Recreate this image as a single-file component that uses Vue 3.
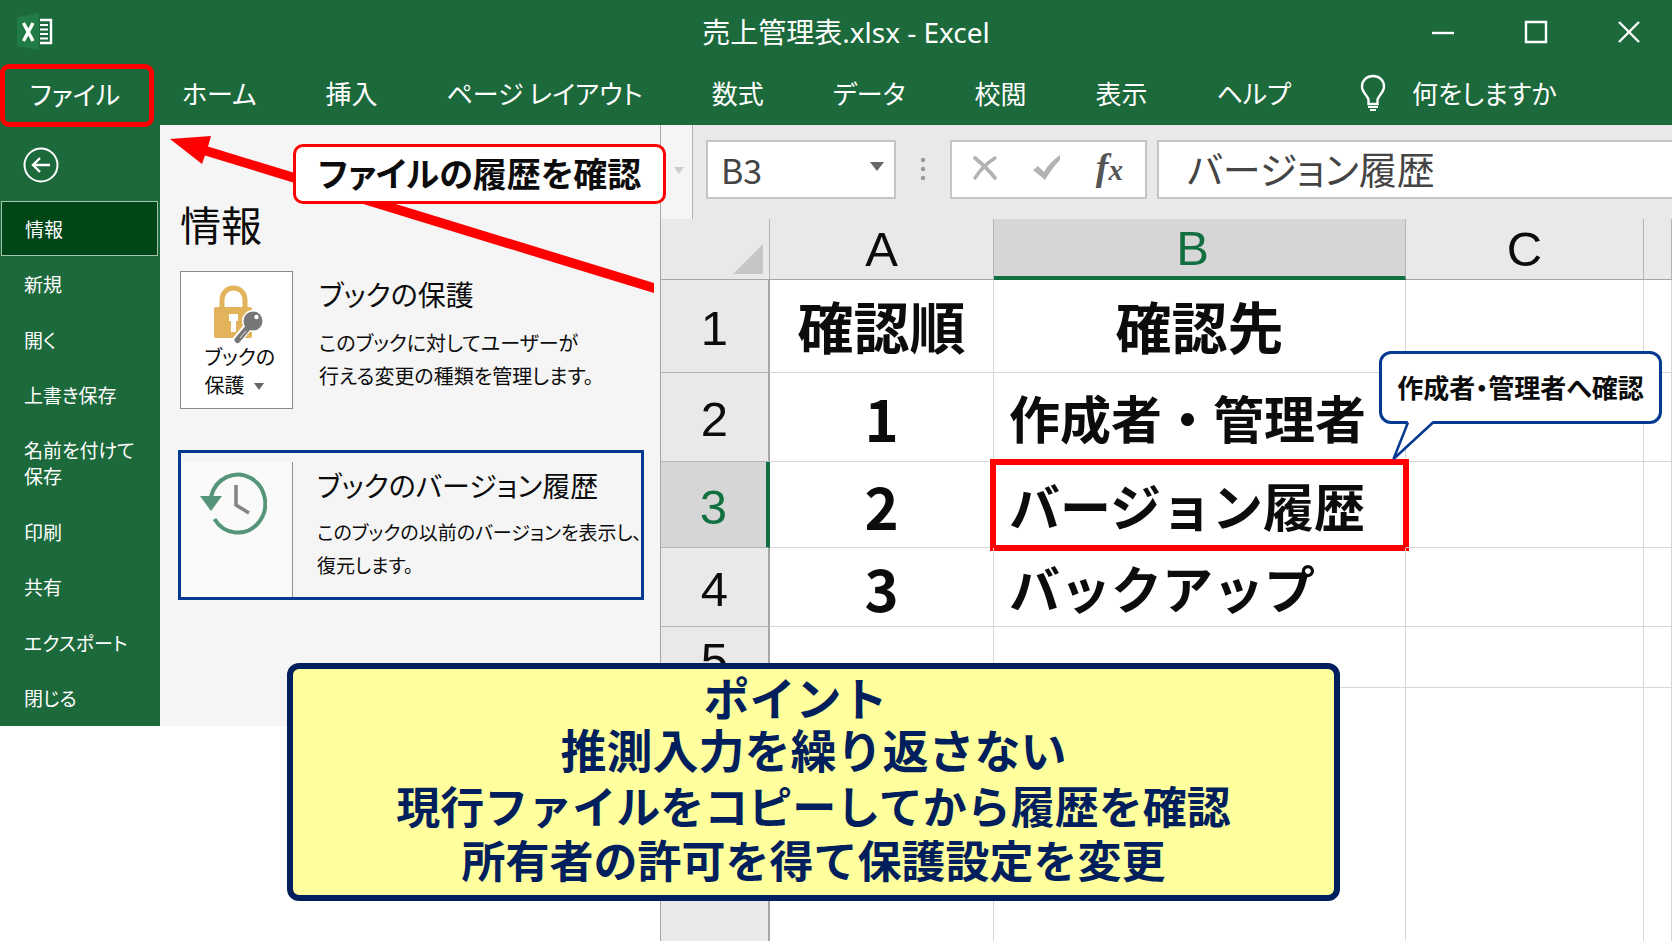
<script setup>
import { ref } from 'vue'

const tabs = ['ホーム', '挿入', 'ページ レイアウト', '数式', 'データ', '校閲', '表示', 'ヘルプ']
const menu = ['情報', '新規', '開く', '上書き保存', '名前を付けて保存', '印刷', '共有', 'エクスポート', '閉じる']
const current = ref('情報')
const cellName = ref('B3')
const formula = ref('バージョン履歴')

const columns = ['A', 'B', 'C', '']
const rows = [
  { n: '1', a: '確認順', b: '確認先', head: true },
  { n: '2', a: '1', b: '作成者・管理者' },
  { n: '3', a: '2', b: 'バージョン履歴', active: true },
  { n: '4', a: '3', b: 'バックアップ' },
  { n: '5', a: '', b: '' },
  { n: '', a: '', b: '' }
]
const points = ['推測入力を繰り返さない', '現行ファイルをコピーしてから履歴を確認', '所有者の許可を得て保護設定を変更']
</script>

<template>
  <div class="window">
    <header class="top">
      <div class="titlebar">
        <svg class="logo" width="38" height="38" viewBox="0 0 38 38" aria-hidden="true">
          <path d="M0 4 22 0V37L0 33Z" fill="#217b46" />
          <path d="M6.500 10 16 28M16 10 6.500 28" stroke="#fff" stroke-width="3.400" fill="none" />
          <path d="M23 7H34V30H23" stroke="#fff" stroke-width="2.4" fill="none" />
          <path d="M23 12H31M23 16.500H31M23 21H31M23 25.500H31" stroke="#fff" stroke-width="2.200" />
        </svg>
        <h1 class="title">売上管理表.xlsx - Excel</h1>
        <div class="controls">
          <button type="button" aria-label="最小化">
            <svg width="24" height="24" viewBox="0 0 24 24"><path d="M1 13H23" /></svg>
          </button>
          <button type="button" aria-label="最大化">
            <svg width="24" height="24" viewBox="0 0 24 24"><path d="M2 2H22V22H2Z" /></svg>
          </button>
          <button type="button" aria-label="閉じる">
            <svg width="24" height="24" viewBox="0 0 24 24"><path d="M2 2 22 22M22 2 2 22" /></svg>
          </button>
        </div>
      </div>
      <nav class="tabs">
        <button type="button" class="tab file">ファイル</button>
        <button v-for="t in tabs" :key="t" type="button" class="tab">{{ t }}</button>
        <button type="button" class="tab ask">
          <svg width="26" height="38" viewBox="0 0 26 38" fill="none" stroke="#fff" stroke-width="2.400" aria-hidden="true">
            <path d="M8.500 30V26C8.500 22 2 19 2 12.500C2 6 7 2 13 2S24 6 24 12.500C24 19 17.500 22 17.500 26V30Z" />
            <path d="M8 33H18M10 36H16" stroke-width="2" />
          </svg>
          何をしますか
        </button>
      </nav>
    </header>

    <div class="body">
      <div class="backstage">
        <aside class="side">
          <button type="button" class="back" aria-label="戻る">
            <svg width="36" height="38" viewBox="0 0 36 38" fill="none" stroke="#fff" stroke-width="2">
              <circle cx="18" cy="19" r="16.500" />
              <path d="M27 19H10M17 12 10 19 17 26" stroke-width="2.400" />
            </svg>
          </button>
          <button
            v-for="m in menu"
            :key="m"
            type="button"
            class="item"
            :class="{ current: m === current }"
            @click="current = m"
          >{{ m }}</button>
        </aside>

        <main class="info">
          <h2>情報</h2>
          <section class="entry">
            <button type="button" class="tile protect">
              <svg width="54" height="60" viewBox="0 0 54 60" aria-hidden="true">
                <path d="M9 24V15C9 8 14 3 20.500 3S32 8 32 15V24" fill="none" stroke="#e3b35c" stroke-width="5" />
                <rect x="1" y="22" width="38" height="31" rx="2" fill="#e3b35c" />
                <path d="M16 29H25V36H23V47H18V36H16Z" fill="#fff" />
                <path d="M40 36 24 55" stroke="#fff" stroke-width="9" stroke-linecap="round" />
                <circle cx="40" cy="36" r="11" fill="#fff" />
                <path d="M39 38 24.500 55" stroke="#777" stroke-width="6" stroke-linecap="round" />
                <path d="M33 46 27 53" stroke="#ddd" stroke-width="1" />
                <circle cx="40" cy="36" r="9.500" fill="#777" />
                <circle cx="43.500" cy="32" r="2.200" fill="#fff" />
              </svg>
              <span>ブックの<br />保護<i class="caret"></i></span>
            </button>
            <div class="words">
              <h3>ブックの保護</h3>
              <p>このブックに対してユーザーが<br />行える変更の種類を管理します。</p>
            </div>
          </section>
          <section class="entry history">
            <button type="button" class="tile clock" aria-label="バージョン履歴">
              <svg width="68" height="64" viewBox="0 0 68 64" fill="none" aria-hidden="true">
                <path d="M12 25A27.500 29 0 1 1 15.500 47" stroke="#57957a" stroke-width="4" />
                <path d="M1 24H23L12 39Z" fill="#57957a" />
                <path d="M37 13V33L50 41" stroke="#858585" stroke-width="3.600" />
              </svg>
            </button>
            <div class="words">
              <h3>ブックのバージョン履歴</h3>
              <p>このブックの以前のバージョンを表示し、<br />復元します。</p>
            </div>
          </section>
        </main>
      </div>

      <div class="book">
        <div class="formula">
          <div class="stub" aria-hidden="true"><i class="caret"></i></div>
          <div class="field name">
            <input v-model="cellName" aria-label="名前ボックス" />
            <button type="button" aria-label="名前の一覧"><i class="caret"></i></button>
          </div>
          <svg class="dots" width="6" height="26" viewBox="0 0 6 26" fill="#999" aria-hidden="true">
            <circle cx="3" cy="4" r="2.200" /><circle cx="3" cy="13" r="2.200" /><circle cx="3" cy="22" r="2.200" />
          </svg>
          <div class="field acts">
            <button type="button" aria-label="キャンセル">
              <svg width="26" height="26" viewBox="0 0 26 26" fill="none" stroke="#b3b3b3" stroke-linecap="round">
                <path d="M3 3C9 8 17 15 23 23" stroke-width="3.800" />
                <path d="M23 3C15 8 8 15 3 23" stroke-width="3.400" />
              </svg>
            </button>
            <button type="button" aria-label="入力">
              <svg width="28" height="26" viewBox="0 0 28 26"><path d="M0 15 5 11 11 17C15 10 20 5 27 0V5C21 11 17 17 12 25Z" fill="#b3b3b3" /></svg>
            </button>
            <button type="button" class="fx" aria-label="関数の挿入">f<small>x</small></button>
          </div>
          <div class="field line"><input v-model="formula" aria-label="数式バー" /></div>
        </div>

        <table class="grid">
          <colgroup>
            <col class="cn" /><col class="ca" /><col class="cb" /><col class="cc" /><col />
          </colgroup>
          <thead>
            <tr>
              <th class="corner"><svg width="32" height="32" viewBox="0 0 32 32" aria-hidden="true"><path d="M31 1V31H1Z" fill="#c6c6c6" /></svg></th>
              <th v-for="c in columns" :key="c" scope="col" :class="{ on: c === 'B' }">{{ c }}</th>
            </tr>
          </thead>
          <tbody>
            <tr v-for="(r, i) in rows" :key="i" :class="'r' + (i + 1)">
              <th scope="row" :class="{ on: r.active }">{{ r.n }}</th>
              <td class="mid" :class="{ head: r.head }">{{ r.a }}</td>
              <td :class="{ mid: r.head, head: r.head, selected: r.active }">{{ r.b }}</td>
              <td></td>
              <td></td>
            </tr>
          </tbody>
        </table>
      </div>
    </div>

    <svg class="arrow" width="490" height="160" viewBox="0 0 490 160" fill="#f00" aria-hidden="true">
      <path d="M2 4 43 1 40 11.500 486 148V158L37 20.500 34 29Z" />
    </svg>
    <div class="callout">ファイルの履歴を確認</div>

    <div class="bubble">
      作成者・管理者へ確認
      <svg width="44" height="42" viewBox="0 0 44 42" aria-hidden="true">
        <path d="M17 0 2 38 42 0" fill="#fff" />
        <path d="M17 1.500 2.500 38 42 1.500" fill="none" stroke="#053a93" stroke-width="2.500" />
      </svg>
    </div>

    <div class="point">
      <strong>ポイント</strong>
      <p v-for="(p, i) in points" :key="i" :class="'p' + i">{{ p }}</p>
    </div>
  </div>
</template>

<style>
body {
  margin: 0;
}
</style>

<style scoped>
.window {
  position: relative;
  display: flex;
  flex-direction: column;
  min-height: 100vh;
  overflow: hidden;
  background: #fff;
  color: #0c0c0c;
  font-family: "Noto Sans CJK JP", sans-serif;
}
.window * {
  box-sizing: border-box;
}
button,
input {
  margin: 0;
  padding: 0;
  border: 0;
  background: none;
  color: inherit;
  font: inherit;
}
h1, h2, h3, p {
  margin: 0;
  font-weight: 400;
}
svg {
  display: block;
  flex: none;
}
.caret {
  display: inline-block;
  border: 5px solid transparent;
  border-top: 7px solid #666;
  border-bottom: 0;
}

/* title bar and ribbon tabs */
.top {
  background: #1c693b;
  color: #fff;
}
.titlebar {
  display: grid;
  grid-template-columns: 1fr auto 1fr;
  align-items: center;
  height: 64px;
  padding: 0 31px 0 17px;
}
.title {
  padding-left: 34px;
  font-family: "Noto Sans", "Noto Sans CJK JP", sans-serif;
  font-size: 28px;
  line-height: 40px;
}
.controls {
  display: flex;
  justify-content: flex-end;
  gap: 69px;
}
.controls svg {
  fill: none;
  stroke: #fff;
  stroke-width: 2.4;
}
.tabs {
  display: flex;
  align-items: center;
  gap: 69px;
  height: 61px;
  padding-bottom: 3px;
  font-size: 26px;
  line-height: 40px;
  font-feature-settings: "palt";
}
.tab {
  flex: none;
  white-space: nowrap;
}
.file {
  align-self: flex-start;
  width: 154px;
  height: 63px;
  margin-right: -41px;
  padding: 0 4px 4px 0;
  border: 5px solid #f00;
  border-radius: 9px;
  position: relative;
  z-index: 2;
}
.ask {
  display: flex;
  align-items: center;
  gap: 26px;
}

.body {
  display: flex;
  flex: 1;
}

/* backstage */
.backstage {
  display: flex;
  flex: none;
  align-self: flex-start;
  width: 660px;
  height: 601px;
  font-feature-settings: "palt";
}
.side {
  display: flex;
  flex: none;
  flex-direction: column;
  width: 160px;
  background: #1c693b;
  color: #fff;
}
.back {
  height: 76px;
  padding: 4px 0 0 23px;
}
.item {
  flex: 1 1 55px;
  padding: 0 20px 0 24px;
  text-align: left;
  font-size: 19px;
  line-height: 26px;
}
.item:nth-of-type(6) {
  flex-basis: 81px;
}
.current {
  margin: 0 2px 0 1px;
  padding-left: 23px;
  border: 1px solid #a5c3ae;
  background: #004616;
}
.info {
  flex: 1;
  min-width: 0;
  padding: 68px 16px 0 18px;
  background: #f5f5f5;
}
h2 {
  padding-left: 2px;
  font-size: 41px;
  line-height: 60px;
}
.entry {
  display: flex;
  margin-top: 18px;
  padding-left: 2px;
}
.tile {
  display: flex;
  flex: none;
  flex-direction: column;
  align-items: center;
  width: 113px;
}
.protect {
  height: 138px;
  padding-top: 13px;
  border: 1px solid #8a8a8a;
  background: #fff;
  font-size: 20px;
  line-height: 28px;
}
.protect svg {
  margin: 0 0 -2px 6px;
}
.protect span {
  width: 64px;
  text-align: left;
  white-space: nowrap;
}
.protect .caret {
  margin: 0 0 3px 9px;
}
.words {
  padding-left: 26px;
  white-space: nowrap;
}
h3 {
  font-size: 28px;
  line-height: 46px;
}
.words p {
  margin-top: 9px;
  font-size: 20px;
  line-height: 33px;
}
.history {
  margin-top: 41px;
  padding: 0;
  height: 150px;
  border: 3px solid #053a93;
}
.history .tile {
  width: 112px;
  margin-top: 9px;
  padding-top: 10px;
  border-right: 1px solid #8f8f8f;
  background: #fafafa;
}
.clock svg {
  margin-right: 8px;
}
.history .words {
  padding: 9px 0 0 24px;
}
.history p {
  margin-top: 7px;
  font-size: 19px;
}

/* formula bar */
.book {
  display: flex;
  flex: 1;
  flex-direction: column;
  min-width: 0;
  border-left: 1px solid #a6a6a6;
}
.formula {
  display: flex;
  height: 94px;
  background: #e9e9e9;
  color: #444;
}
.stub {
  width: 32px;
  margin-right: 13px;
  padding: 30px 0 0 13px;
  border-right: 1px solid #b0b0b0;
  background: #f5f5f5;
}
.stub .caret {
  border-top-color: #ccc;
}
.field {
  display: flex;
  align-items: center;
  height: 59px;
  margin-top: 15px;
  border: 2px solid #c5c5c5;
  background: #fff;
}
.field input {
  flex: 1;
  min-width: 0;
  height: 50px;
  font-size: 34px;
}
.name {
  width: 190px;
  padding: 0 10px 0 13px;
}
.name .caret {
  border-width: 9px 7px 0;
  margin-bottom: 6px;
}
.dots {
  margin: 31px 24px 0;
}
.acts {
  justify-content: space-between;
  width: 197px;
  padding: 0 22px 3px 20px;
}
.fx {
  color: #555;
  font: italic 600 38px/44px "Liberation Serif", serif;
}
.fx small {
  font-size: 29px;
}
.line {
  flex: 1;
  margin-left: 10px;
  border-right: 0;
  padding: 0 0 5px 28px;
}
.line input {
  font-size: 38px;
  font-feature-settings: "palt";
}

/* sheet */
.grid {
  width: 100%;
  table-layout: fixed;
  border-collapse: separate;
  border-spacing: 0;
}
.cn { width: 109px; }
.ca { width: 224px; }
.cb { width: 412px; }
.cc { width: 238px; }
th {
  padding: 0;
  border-right: 1px solid #b5b5b5;
  border-bottom: 1px solid #a6a6a6;
  background: #e9e9e9;
  font: 400 49px/56px "Liberation Sans", Arial, sans-serif;
}
tbody th {
  padding-top: 4px;
  border-right: 2px solid #a6a6a6;
  border-bottom-color: #b5b5b5;
}
thead tr { height: 61px; }
.corner svg {
  margin: 20px 5px 0 auto;
}
.on {
  background: #d6d6d6;
  color: #127040;
}
thead .on {
  padding-right: 14px;
  border-bottom: 4px solid #127040;
}
tbody .on {
  border-right: 4px solid #127040;
}
td {
  position: relative;
  padding: 0 0 0 15px;
  border-right: 1px solid #d6d6d6;
  border-bottom: 1px solid #d6d6d6;
  font-size: 51px;
  font-weight: 700;
  line-height: 60px;
  white-space: nowrap;
}
.mid {
  padding: 0;
  text-align: center;
  font-size: 58px;
}
.head {
  padding-bottom: 3px;
  font-size: 56px;
}
.r1 { height: 93px; }
.r2 { height: 89px; }
.r3 { height: 86px; }
.r4 { height: 79px; }
.r5 { height: 61px; }
.r6 { height: 253px; }
.r5 th,
.r6 th,
.r6 td {
  border-bottom: 0;
}
.selected::after {
  content: "";
  position: absolute;
  inset: -3px -4px -4px;
  border: 6px solid #f00;
}

/* annotations over the sheet */
.arrow {
  position: absolute;
  left: 168px;
  top: 135px;
}
.callout {
  position: absolute;
  left: 293px;
  top: 144px;
  padding: 4px 22px 6px;
  border: 3px solid #f00;
  border-radius: 10px;
  background: #fff;
  font-size: 34px;
  font-weight: 700;
  line-height: 44px;
  white-space: nowrap;
  font-feature-settings: "palt";
}
.bubble {
  position: absolute;
  left: 1379px;
  top: 351px;
  width: 283px;
  height: 73px;
  border: 3px solid #053a93;
  border-radius: 12px;
  background: #fff;
  font-size: 26px;
  font-weight: 700;
  line-height: 66px;
  text-align: center;
  white-space: nowrap;
  font-feature-settings: "palt";
}
.bubble svg {
  position: absolute;
  left: 9px;
  top: 67px;
}
.point {
  position: absolute;
  left: 287px;
  top: 663px;
  width: 1053px;
  height: 238px;
  padding-top: 2px;
  border: 6px solid #001f5c;
  border-radius: 12px;
  background: #ffff9e;
  color: #001f5c;
  text-align: center;
  font-size: 44px;
  line-height: 54px;
  white-space: nowrap;
}
.point strong {
  display: block;
  padding-right: 36px;
  font-size: 46px;
  line-height: 50px;
}
.point p {
  font-weight: 700;
}
.point .p0 {
  margin-bottom: 3px;
  font-size: 46px;
}
</style>
